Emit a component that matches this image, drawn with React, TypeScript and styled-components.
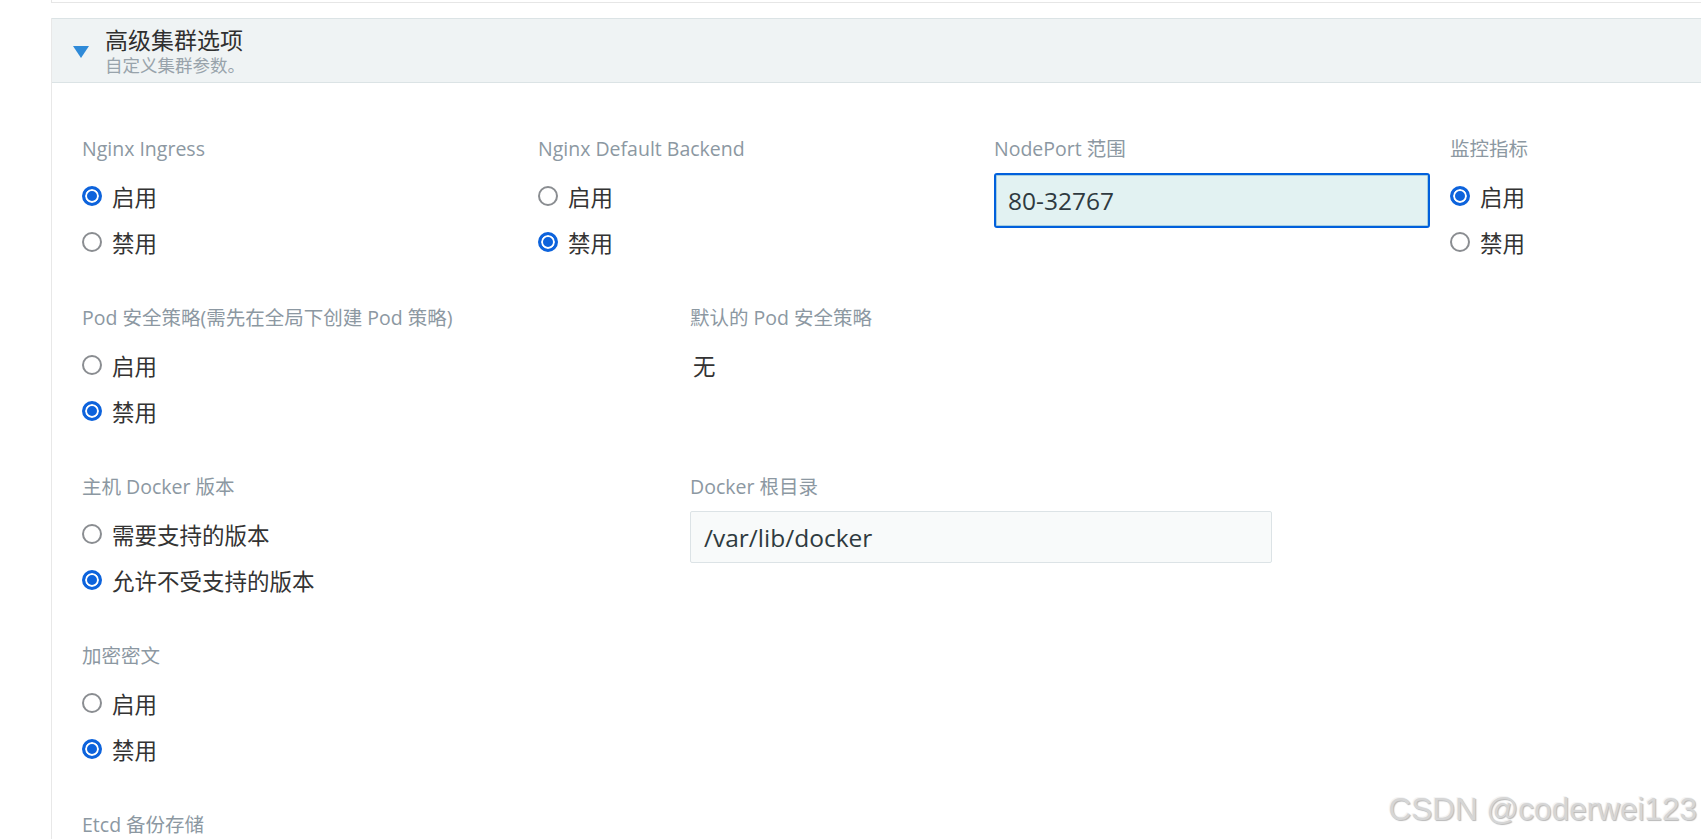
import React from 'react';
import styled, { createGlobalStyle, css } from 'styled-components';

const GlobalStyle = createGlobalStyle`
  html, body {
    margin: 0;
    padding: 0;
    background: #fff;
    overflow: hidden;
  }
  body {
    font-family: "Open Sans", "Noto Sans CJK SC", "Noto Sans", sans-serif;
    color: #333;
  }
`;

const Page = styled.div`
  position: relative;
  width: 1701px;
  height: 839px;
  overflow: hidden;
`;

const Canvas = styled.div`
  display: flex;
  flex-direction: column;
  gap: 15px;
  margin-left: 51px;
  width: 1900px;
`;

const TopBox = styled.div`
  height: 2px;
  border-left: 1px solid #e6e6e6;
  border-bottom: 1px solid #e6e6e6;
`;

const Section = styled.section`
  display: flex;
  flex-direction: column;
  border-left: 1px solid #e8e8e8;
`;

const SectionHeader = styled.div`
  display: flex;
  align-items: center;
  gap: 16px;
  height: 63px;
  padding-left: 21px;
  background: #eff3f4;
  border-top: 1px solid #dbe3e5;
  border-bottom: 1px solid #dbe3e5;
`;

const Caret = styled.span`
  width: 0;
  height: 0;
  border-left: 8px solid transparent;
  border-right: 8px solid transparent;
  border-top: 12px solid #2f8ad8;
  margin-top: 2px;
`;

const HeaderText = styled.div`
  display: flex;
  flex-direction: column;
  gap: 1px;
  margin-top: 1px;
`;

const Title = styled.div`
  font-size: 23px;
  line-height: 27px;
  color: #2f2f2f;
`;

const Subtitle = styled.div`
  font-size: 17.5px;
  line-height: 20px;
  color: #98a3ab;
`;

const Body = styled.div`
  display: flex;
  flex-direction: column;
  gap: 43px;
  padding: 56px 30px 0;
`;

const Row = styled.div`
  display: grid;
  grid-template-columns: repeat(12, 132px);
  column-gap: 20px;
`;

const Field = styled.div<{ $span: number }>`
  grid-column: span ${(p) => p.$span};
  display: flex;
  flex-direction: column;
`;

const Label = styled.div`
  font-size: 19.5px;
  line-height: 20px;
  color: #8c98a2;
  margin-bottom: 14px;
`;

const Option = styled.label`
  display: flex;
  align-items: center;
  gap: 10px;
  height: 46px;
  font-size: 22.5px;
  color: #333;
`;

const Dot = styled.span<{ $checked?: boolean }>`
  box-sizing: border-box;
  width: 20px;
  height: 20px;
  border-radius: 50%;
  flex: none;
  ${(p) =>
    p.$checked
      ? css`
          border: 3px solid #0d63dc;
          background: #0d63dc;
          box-shadow: inset 0 0 0 2px #fff;
        `
      : css`
          border: 2.5px solid #8a8d91;
          background: #fff;
        `}
`;

const StaticValue = styled.div`
  height: 46px;
  display: flex;
  align-items: center;
  font-size: 22.5px;
  color: #333;
  padding-left: 3px;
`;

const TextInput = styled.div<{ $focused?: boolean }>`
  box-sizing: border-box;
  display: flex;
  align-items: center;
  font-size: 24.5px;
  color: #2f3a40;
  border-radius: 3px;
  ${(p) =>
    p.$focused
      ? css`
          height: 55px;
          padding: 0 12px;
          background: #e2f2f2;
          border: 2px solid #0160dc;
          box-shadow: inset 0 0 0 1px #a5cfe0;
        `
      : css`
          width: 582px;
          height: 52px;
          padding: 0 13px;
          background: #f8fafa;
          border: 1px solid #dce3e6;
          border-radius: 2px;
        `}
`;

const Watermark = styled.div`
  position: absolute;
  right: 4px;
  bottom: 14px;
  font-family: "Liberation Sans", Arial, sans-serif;
  font-size: 31.5px;
  line-height: 31px;
  color: #d6d6d6;
  text-shadow: 1px 1px 1px #b9b9b9, -1px -1px 0 #f4f4f4;
`;

type Radio = { label: string; checked?: boolean };

const RadioGroup: React.FC<{ options: Radio[] }> = ({ options }) => (
  <div>
    {options.map((o) => (
      <Option key={o.label}>
        <Dot $checked={o.checked} />
        {o.label}
      </Option>
    ))}
  </div>
);

const onOff = (on: boolean): Radio[] => [
  { label: '启用', checked: on },
  { label: '禁用', checked: !on },
];

export default function App() {
  return (
    <Page>
      <GlobalStyle />
      <Canvas>
        <TopBox />
        <Section>
          <SectionHeader>
            <Caret />
            <HeaderText>
              <Title>高级集群选项</Title>
              <Subtitle>自定义集群参数。</Subtitle>
            </HeaderText>
          </SectionHeader>
          <Body>
            <Row>
              <Field $span={3}>
                <Label>Nginx Ingress</Label>
                <RadioGroup options={onOff(true)} />
              </Field>
              <Field $span={3}>
                <Label>Nginx Default Backend</Label>
                <RadioGroup options={onOff(false)} />
              </Field>
              <Field $span={3}>
                <Label>NodePort 范围</Label>
                <TextInput $focused>80-32767</TextInput>
              </Field>
              <Field $span={3}>
                <Label>监控指标</Label>
                <RadioGroup options={onOff(true)} />
              </Field>
            </Row>
            <Row>
              <Field $span={4}>
                <Label>Pod 安全策略(需先在全局下创建 Pod 策略)</Label>
                <RadioGroup options={onOff(false)} />
              </Field>
              <Field $span={4}>
                <Label>默认的 Pod 安全策略</Label>
                <StaticValue>无</StaticValue>
              </Field>
            </Row>
            <Row>
              <Field $span={4}>
                <Label>主机 Docker 版本</Label>
                <RadioGroup
                  options={[
                    { label: '需要支持的版本' },
                    { label: '允许不受支持的版本', checked: true },
                  ]}
                />
              </Field>
              <Field $span={4}>
                <Label>Docker 根目录</Label>
                <TextInput>/var/lib/docker</TextInput>
              </Field>
            </Row>
            <Row>
              <Field $span={4}>
                <Label>加密密文</Label>
                <RadioGroup options={onOff(false)} />
              </Field>
            </Row>
            <Row>
              <Field $span={4}>
                <Label>Etcd 备份存储</Label>
              </Field>
            </Row>
          </Body>
        </Section>
      </Canvas>
      <Watermark>CSDN @coderwei123</Watermark>
    </Page>
  );
}
